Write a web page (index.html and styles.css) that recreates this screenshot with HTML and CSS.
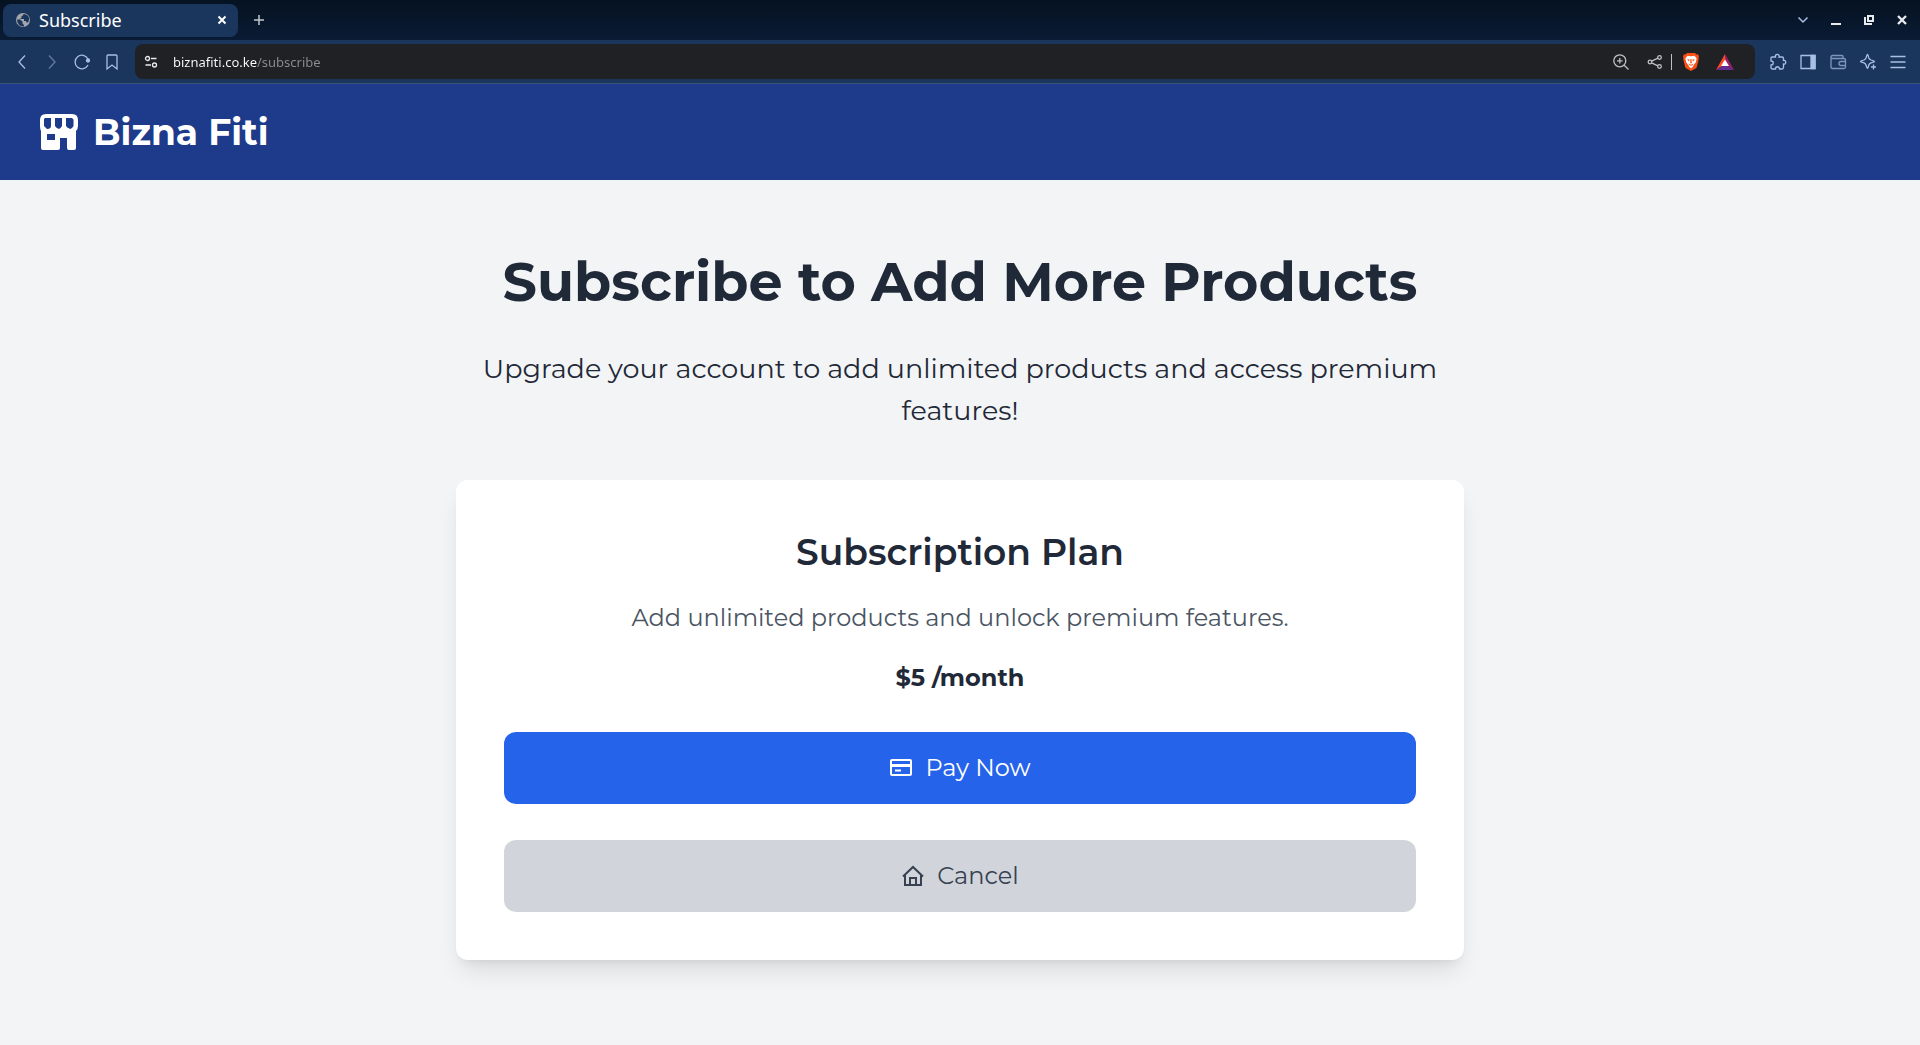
FILE: index.html
```html
<!DOCTYPE html>
<html lang="en">
<head>
    <meta charset="UTF-8">
    <meta name="viewport" content="width=device-width, initial-scale=1.0">
    <title>Subscribe</title>
    <link rel="stylesheet" href="styles.css">
</head>
<body>
    <div class="browser">
        <div class="tab-bar">
            <div class="tab">
                <svg class="globe" width="16" height="16" viewBox="0 0 16 16">
                    <circle cx="8" cy="8" r="7" fill="#a3a5aa"/>
                    <path d="M2 7.500h3l2.500 2v2L9 13v1.500q-7-.5-7-7zM8.500 2q0 2-2 2v2l-2 1h4.500v2h2l.5 1.500h1.500Q16 5 11 2.500z" fill="#1b365d"/>
                </svg>
                <span class="tab-title">Subscribe</span>
                <button class="icon-button" aria-label="Close tab">
                    <svg width="12" height="12" viewBox="0 0 12 12" fill="none" stroke="#fff" stroke-width="2"><path d="M2.500 2.500l7 7m0-7l-7 7"/></svg>
                </button>
            </div>
            <button class="icon-button new-tab" aria-label="New tab">
                <svg width="12" height="12" viewBox="0 0 12 12" fill="none" stroke="#c3c7ce" stroke-width="1.500"><path d="M6 1v10M1 6h10"/></svg>
            </button>
            <div class="window-buttons">
                <button class="icon-button" aria-label="Search tabs">
                    <svg width="12" height="12" viewBox="0 0 12 12" fill="none" stroke="#a9bfe4" stroke-width="1.500"><path d="M1.500 3.500L6 8l4.500-4.500"/></svg>
                </button>
                <button class="icon-button" aria-label="Minimize">
                    <svg width="12" height="12" viewBox="0 0 12 12" fill="#e8eaed"><path d="M1 9h10v2H1z"/></svg>
                </button>
                <button class="icon-button" aria-label="Restore">
                    <svg width="12" height="12" viewBox="0 0 12 12" fill="none" stroke="#e8eaed" stroke-width="2"><path d="M5 2h5v5H5zM2 3v7h7"/></svg>
                </button>
                <button class="icon-button" aria-label="Close window">
                    <svg width="12" height="12" viewBox="0 0 12 12" fill="none" stroke="#e8eaed" stroke-width="2.400"><path d="M2 2l8 8m0-8l-8 8"/></svg>
                </button>
            </div>
        </div>

        <div class="toolbar">
            <div class="nav-buttons">
                <button class="icon-button" aria-label="Back">
                    <svg width="18" height="18" viewBox="0 0 18 18"><path d="M12 2.500L6 9l6 6.500"/></svg>
                </button>
                <button class="icon-button faded" aria-label="Forward">
                    <svg width="18" height="18" viewBox="0 0 18 18"><path d="M6 2.500L12 9l-6 6.500"/></svg>
                </button>
                <button class="icon-button" aria-label="Reload">
                    <svg width="18" height="18" viewBox="0 0 18 18"><path d="M15 6A6.800 6.800 0 1 0 15 12"/><circle cx="15" cy="7.500" r="1.500" fill="#a9bfe4"/></svg>
                </button>
                <button class="icon-button" aria-label="Bookmark">
                    <svg width="18" height="18" viewBox="0 0 18 18"><path d="M4 3q0-1 1-1h8q1 0 1 1v13l-5-4-5 4z"/></svg>
                </button>
            </div>

            <div class="address-bar">
                <svg width="14" height="14" viewBox="0 0 14 14" stroke="#e8eaed"><circle cx="3.500" cy="3.500" r="2"/><path d="M7 3.500h5.500M1.500 10h5.500"/><circle cx="10.500" cy="10" r="2"/></svg>
                <input class="url" type="text" value="biznafiti.co.ke/subscribe" aria-label="Address">
                <button class="icon-button zoom" aria-label="Zoom">
                    <svg width="18" height="18" viewBox="0 0 18 18"><circle cx="7.800" cy="7.800" r="6"/><path d="M12.200 12.200l4.300 4.300M7.800 5v5.600M5 7.800h5.600"/></svg>
                </button>
                <button class="icon-button share" aria-label="Share">
                    <svg width="18" height="18" viewBox="0 0 18 18"><circle cx="4" cy="9" r="1.800"/><circle cx="13.500" cy="4.500" r="1.800"/><circle cx="13.500" cy="13.500" r="1.800"/><path d="M5.600 8.200l6.300-3M5.600 9.800l6.300 3"/></svg>
                </button>
                <span class="divider"></span>
                <button class="icon-button brave" aria-label="Brave Shields">
                    <svg width="18" height="18" viewBox="0 0 18 18">
                        <path d="M5 0h8l1.500 1.500L16 1.300l1 2.200-.5 1.500.3 1-2 8.200-1.200 1.300L9 18l-4.600-2.500-1.200-1.300L1.200 6l.3-1L1 3.500l1-2.200 1.500.2z" fill="#fb4f14"/>
                        <path d="M5.500 2.800L9 3.300l3.500-.5 2.200 2.800-1 4-2 2.500-1 1.800L9 15.300l-1.700-1.400-1-1.800-2-2.500-1-4z" fill="#fff"/>
                        <path d="M5 6.200l2.600.4L7 8.500zM13 6.200l-2.600.4.6 1.900zM8.500 6h1l.3 4L9 10.600l-.8-.6zM6.500 10.500l2.500 1.300 2.500-1.300-1 1.800-1.500.5-1.500-.5z" fill="#fb4f14"/>
                    </svg>
                </button>
                <button class="icon-button bat" aria-label="Brave Rewards">
                    <svg width="18" height="16" viewBox="0 0 18 16">
                        <path d="M9 0L0 16l9-6z" fill="#ff4724"/>
                        <path d="M9 0l9 16-9-6z" fill="#9e1f63"/>
                        <path d="M0 16h18l-9-6z" fill="#662d91"/>
                        <path d="M9 5.500l4 6.500H5z" fill="#fff"/>
                    </svg>
                </button>
            </div>

            <div class="tool-buttons">
                <button class="icon-button" aria-label="Extensions">
                    <svg width="18" height="18" viewBox="0 0 18 18"><path d="M3 4h3.500C5.500.5 11 .5 10 4h3q1.500 0 1.500 1.500v2C17.500 6.500 17.500 12 14.500 11v3.500q0 1.500-1.500 1.500h-2.500c0-3-4-3-4 0H3.500Q2 16 2 14.500V12c3 0 3-4 0-4V5q0-1 1-1z"/></svg>
                </button>
                <button class="icon-button" aria-label="Sidebar">
                    <svg width="18" height="18" viewBox="0 0 18 18"><path d="M2 2.500h14v13H2z"/><path d="M12 2.500h4v13h-4z" fill="#a9bfe4"/></svg>
                </button>
                <button class="icon-button dim" aria-label="Wallet">
                    <svg width="18" height="18" viewBox="0 0 18 18"><path d="M14 5.500V3.500q0-1-1-1H3.500Q2 2.500 2 4t1.500 1.500H15q1.500 0 1.500 1.500v7q0 1.500-1.500 1.500H3.500Q2 15.500 2 14V4M16.500 8.500H12q-2 0-2 2t2 2h4.500"/></svg>
                </button>
                <button class="icon-button" aria-label="Leo AI">
                    <svg width="18" height="18" viewBox="0 0 18 18"><path d="M8.500 1.500Q9 1.500 9.800 5 10.200 6.200 12 7q3.500 1 3.500 1.500T12 9.800Q10.200 10.500 9.800 12q-.8 3.300-1.300 3.300T7 12q-.5-1.500-2-2.200-3.500-.8-3.500-1.300T5 7q1.500-.8 2-2 1-3.500 1.500-3.500zM14.500 11.500v5M12 14h5"/></svg>
                </button>
                <button class="icon-button" aria-label="Menu">
                    <svg width="18" height="18" viewBox="0 0 18 18"><path d="M1.500 3.500h15M1.500 9h15M1.500 14.500h15"/></svg>
                </button>
            </div>
        </div>
    </div>

    <header class="header">
        <a class="brand" href="#">
            <svg width="45" height="45" viewBox="-3 -2 45 45">
                <path d="M7 2h26q6 0 6 6v6q0 3-2 5v17q0 2-2 2h-5q-2 0-2-2V26h-7v10q0 2-2 2H4q-2 0-2-2V19q-1-2-1-5V8q0-6 6-6z" fill="#fff"/>
                <path d="M6 6h6v8q0 3-4 3l-3-3V7zM16 6h7v8q-1 2-3 3-3-1-4-3zM27 6h6l1.500 1.500V14q-1 2-3 3-3.500-1-4.500-3zM8 22h8v6H8z" fill="#1e3a8a"/>
            </svg>
            <span>Bizna Fiti</span>
        </a>
    </header>

    <main class="main">
        <h1 class="title">Subscribe to Add More Products</h1>
        <p class="subtitle">Upgrade your account to add unlimited products and access premium features!</p>

        <section class="card">
            <h2 class="plan">Subscription Plan</h2>
            <p class="description">Add unlimited products and unlock premium features.</p>
            <p class="price">$5 /month</p>
            <div class="actions">
                <button class="button pay">
                    <svg width="24" height="24" viewBox="0 0 24 24" fill="none" stroke="currentColor" stroke-width="2"><rect x="2" y="4" width="20" height="15" rx="1"/><path d="M2 9.500h20" stroke-width="3"/><path d="M6 14.500h6"/></svg>
                    Pay Now
                </button>
                <button class="button cancel">
                    <svg width="24" height="24" viewBox="0 0 24 24" fill="none" stroke="currentColor" stroke-width="2"><path d="M2 12.500L12 3l10 9.500M4 11v10h16V11M9 21v-7h6v7"/></svg>
                    Cancel
                </button>
            </div>
        </section>
    </main>
</body>
</html>
```
FILE: styles.css
```css
*{
   margin: 0;
   padding: 0;
   box-sizing: border-box;
}

body{
   font-family: Montserrat, Inter, sans-serif;
   color: #1f2937;
   min-height: 100vh;
   background-color: #f3f4f6;
}

button{
   font: inherit;
   border: none;
   cursor: pointer;
}

.browser{
   font-family: "Noto Sans", sans-serif;
   color: white;
}

.icon-button{
   display: flex;
   align-items: center;
   justify-content: center;
   background: none;
}

.tab-bar{
   height: 40px;
   padding: 0 12px 0 3px;
   display: flex;
   align-items: center;
   background: linear-gradient(#051220, #0a1b35);
}

.tab{
   width: 235px;
   height: 33px;
   padding: 0 10px 0 12px;
   display: flex;
   align-items: center;
   gap: 8px;
   border-radius: 8px;
   background-color: #1b365d;
}

.tab-title{
   flex: 1;
   font-size: 18px;
}

.new-tab{
   margin-left: 15px;
}

.window-buttons{
   margin-left: auto;
   display: flex;
   gap: 21px;
}

.toolbar{
   height: 44px;
   padding: 0 13px;
   display: flex;
   align-items: center;
   background-color: #1b365d;
   border-bottom: 1px solid #3a5378;
}

.nav-buttons,
.tool-buttons{
   display: flex;
   gap: 12px;
}

.toolbar svg{
   fill: none;
   stroke-width: 1.3;
}

.nav-buttons svg,
.tool-buttons svg{
   stroke: #a9bfe4;
}

.faded{
   opacity: 0.5;
}

.dim{
   opacity: 0.7;
}

.address-bar{
   flex: 1;
   height: 35px;
   margin: 0 14px;
   padding: 0 21px 0 9px;
   display: flex;
   align-items: center;
   border-radius: 8px;
   background-color: #202124;
}

.url{
   flex: 1;
   margin-left: 15px;
   font-family: inherit;
   font-size: 13px;
   border: none;
   outline: none;
   /* host in white, path in grey */
   color: transparent;
   background: linear-gradient(90deg, #ffffff 84px, #8b8d91 84px) text;
}

.zoom svg,
.share svg{
   stroke: #bdc1c6;
}

.share{
   margin-left: 16px;
}

.divider{
   width: 1px;
   height: 16px;
   margin: 0 10px 0 7px;
   background-color: #bdc1c6;
}

.bat{
   margin-left: 16px;
}

.header{
   padding: 24px 36px;
   background-color: #1e3a8a;
}

.brand{
   display: flex;
   align-items: center;
   gap: 12px;
   font-size: 36px;
   font-weight: 700;
   line-height: 48px;
   color: white;
   text-decoration: none;
}

.main{
   max-width: 1008px;
   margin: 0 auto;
   padding: 72px 0;
   text-align: center;
}

.title{
   margin-bottom: 36px;
   font-size: 54px;
   font-weight: 700;
   line-height: 60px;
}

.subtitle{
   margin-bottom: 48px;
   font-size: 27px;
   line-height: 42px;
}

.card{
   padding: 48px;
   border-radius: 12px;
   background-color: white;
   box-shadow: 0 15px 23px -5px rgba(0, 0, 0, 0.1), 0 6px 9px -6px rgba(0, 0, 0, 0.1);
}

.plan{
   margin-bottom: 24px;
   font-size: 36px;
   font-weight: 600;
   line-height: 48px;
}

.description{
   margin-bottom: 24px;
   font-size: 24px;
   line-height: 36px;
   color: #4b5563;
}

.price{
   margin-bottom: 36px;
   font-size: 24px;
   font-weight: 700;
   line-height: 36px;
}

.actions{
   display: flex;
   flex-direction: column;
   gap: 36px;
}

.button{
   padding: 18px;
   display: flex;
   align-items: center;
   justify-content: center;
   gap: 12px;
   font-size: 24px;
   line-height: 36px;
   border-radius: 12px;
}

.pay{
   color: white;
   background-color: #2563eb;
}

.cancel{
   color: #374151;
   background-color: #d1d5db;
}
```
